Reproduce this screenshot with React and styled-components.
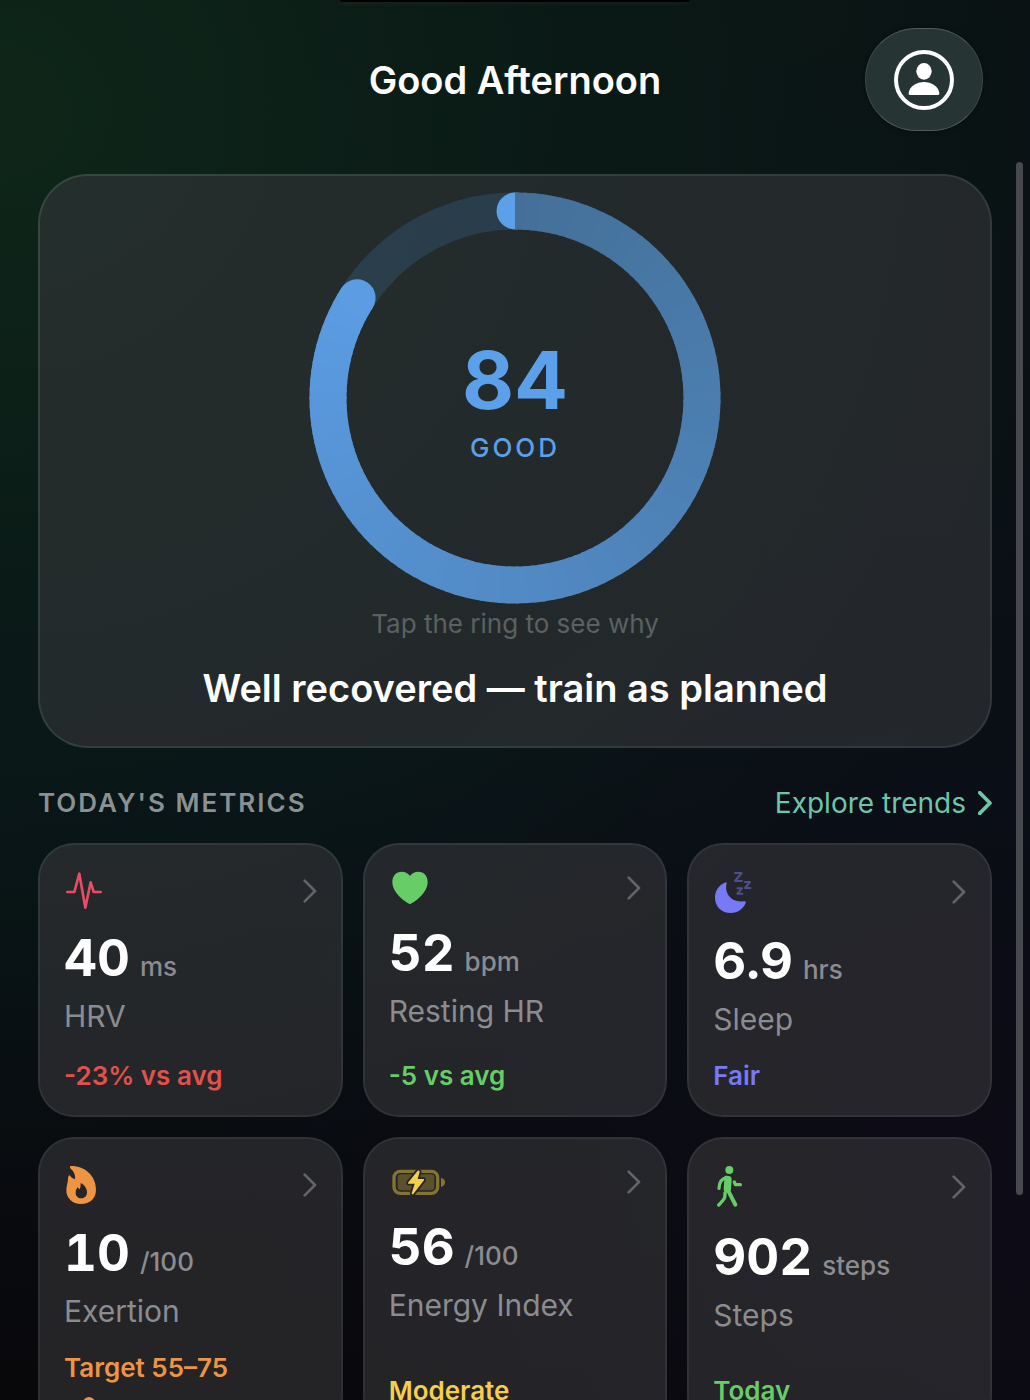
import React from "react";
import styled, { createGlobalStyle } from "styled-components";

const GlobalStyle = createGlobalStyle`
	* {
		box-sizing: border-box;
	}

	body {
		margin: 0;
		background: #06090c;
		font-family: Inter, "Liberation Sans", sans-serif;
		color: #ffffff;
	}

	h1, h2, p {
		margin: 0;
	}
`;

const RING_SIZE = 412;
const RING_STROKE = 37;
const RING_RADIUS = 187;
const RING_STEPS = 120;
const RING_FROM = [68, 112, 152];
const RING_TO = [91, 156, 227];

const pointOnRing = (turn) => {
	const angle = turn * Math.PI * 2 - Math.PI / 2;
	const c = RING_SIZE / 2;
	return [c + RING_RADIUS * Math.cos(angle), c + RING_RADIUS * Math.sin(angle)];
};

const ringColor = (t) =>
	`rgb(${RING_FROM.map((v, i) => Math.round(v + (RING_TO[i] - v) * t)).join(",")})`;

const ScoreRing = ({ score, label }) => {
	const total = score / 100;
	const [startX, startY] = pointOnRing(0);
	const [endX, endY] = pointOnRing(total);

	// svg has no conic gradient, so the arc is built from short pieces
	const pieces = Array.from({ length: RING_STEPS }, (_, i) => {
		const from = pointOnRing((i / RING_STEPS) * total);
		const to = pointOnRing(Math.min((i + 1.3) / RING_STEPS, 1) * total);
		return (
			<path
				key={i}
				d={`M${from.join(" ")} A${RING_RADIUS} ${RING_RADIUS} 0 0 1 ${to.join(" ")}`}
				stroke={ringColor(i / RING_STEPS)}
				strokeWidth={RING_STROKE}
				fill="none"
			/>
		);
	});

	return (
		<RingButton type="button">
			<svg width={RING_SIZE} height={RING_SIZE} viewBox={`0 0 ${RING_SIZE} ${RING_SIZE}`} aria-hidden="true">
				<circle
					cx={RING_SIZE / 2}
					cy={RING_SIZE / 2}
					r={RING_RADIUS}
					fill="none"
					stroke="#4aa0ea"
					strokeOpacity="0.17"
					strokeWidth={RING_STROKE}
				/>
				<circle cx={startX} cy={startY} r={RING_STROKE / 2} fill="#5ca0ea" />
				{pieces}
				<circle cx={endX} cy={endY} r={RING_STROKE / 2} fill={ringColor(1)} />
			</svg>
			<RingText>
				<RingScore>{score}</RingScore>
				<RingLabel>{label}</RingLabel>
			</RingText>
		</RingButton>
	);
};

const ProfileIcon = () => (
	<svg width="60" height="60" viewBox="0 0 180 180" aria-hidden="true">
		<circle cx="90" cy="90" r="84" fill="none" stroke="#fff" strokeWidth="12" />
		<ellipse cx="90" cy="64" rx="23" ry="25" fill="#fff" />
		<path
			d="M48 135Q43 135 44 129C47 108 68 96 90 96C112 96 133 108 136 129Q137 135 132 135Z"
			fill="#fff"
		/>
	</svg>
);

const Chevron = ({ weight = 8 }) => (
	<svg width="14" height="24" viewBox="0 0 42 72" aria-hidden="true">
		<path
			d="M5 5L36 36L5 67"
			fill="none"
			stroke="currentColor"
			strokeWidth={weight}
			strokeLinecap="round"
			strokeLinejoin="round"
		/>
	</svg>
);

const PulseIcon = () => (
	<svg width="40" height="43" viewBox="0 0 120 129" aria-hidden="true">
		<path
			d="M10 69H31L46 14L64 116L80 40L89 69H110"
			fill="none"
			stroke="#e84c66"
			strokeWidth="8"
			strokeLinecap="round"
			strokeLinejoin="round"
		/>
	</svg>
);

const HeartIcon = () => (
	<svg width="40" height="38" viewBox="0 0 120 114" aria-hidden="true">
		<path
			d="M63 105C58 105 10 75 10 39C10 20 22 8 38 8C49 8 58 13 63 21C68 13 77 8 88 8C104 8 116 20 116 39C116 75 68 105 63 105Z"
			fill="#67cd67"
		/>
	</svg>
);

const MoonIcon = () => (
	<svg width="40" height="46" viewBox="0 0 120 138" aria-hidden="true">
		<path
			d="M34 42Q41 37 41 43C33 74 56 102 92 97Q101 95 98 102C91 120 74 132 53 132C26 132 6 112 6 86C6 66 17 49 34 42Z"
			fill="#767af6"
		/>
		<g fill="none" stroke="#4f4e8c" strokeWidth="6" strokeLinejoin="round" strokeLinecap="round">
			<path d="M66 12H86L66 36H87" />
			<path d="M96 39H111L96 57H112" />
			<path d="M73 58H87L73 74H88" />
		</g>
	</svg>
);

const FlameIcon = () => (
	<svg width="40" height="44" viewBox="0 0 120 132" aria-hidden="true">
		<path
			fillRule="evenodd"
			d="M20 9C62 8 96 38 96 80C96 106 78 123 51 123C25 123 7 106 7 82C7 68 12 58 12 48C12 42 14 37 17 37C21 42 26 47 33 49C35 36 29 24 20 17C17 14 17 9 20 9ZM50 60C62 66 69 76 69 88C69 99 62 106 52 106C42 106 35 99 35 89C35 80 39 76 41 73C43 76 45 78 47 79C50 73 50 66 50 60Z"
			fill="#ee9443"
		/>
	</svg>
);

const BatteryIcon = () => (
	<svg width="58" height="38" viewBox="0 0 174 114" aria-hidden="true">
		<rect x="15" y="25" width="131" height="66" rx="19" fill="none" stroke="#83752f" strokeWidth="10" />
		<rect x="26" y="34" width="110" height="48" rx="9" fill="#5a522c" />
		<path d="M156 44C164 46 168 51 168 58C168 65 164 70 156 72Z" fill="#83752f" />
		<path
			d="M86 23L57 59Q56 62 59 62H77L68 91Q69 96 73 93L105 52Q107 48 103 48H86L92 26Q91 21 86 23Z"
			fill="#f5cf4a"
			stroke="#27272a"
			strokeWidth="11"
			paintOrder="stroke"
			strokeLinejoin="round"
		/>
	</svg>
);

const WalkIcon = () => (
	<svg width="40" height="48" viewBox="0 0 120 144" aria-hidden="true">
		<circle cx="49" cy="21" r="12" fill="#67cd67" />
		<g fill="none" stroke="#67cd67" strokeLinecap="round" strokeLinejoin="round">
			<path d="M45 50L43 78" strokeWidth="22" />
			<path d="M40 43C26 49 19 56 18 76" strokeWidth="10" />
			<path d="M64 57L67 65H82" strokeWidth="10" />
			<path d="M45 82L67 125" strokeWidth="12" />
			<path d="M36 90C37 107 33 109 17 126" strokeWidth="10" />
		</g>
	</svg>
);

const METRICS = [
	{ id: "hrv", icon: PulseIcon, value: "40", unit: "ms", name: "HRV", status: "-23% vs avg", color: "#e0524b" },
	{ id: "resting-hr", icon: HeartIcon, value: "52", unit: "bpm", name: "Resting HR", status: "-5 vs avg", color: "#67cd67" },
	{ id: "sleep", icon: MoonIcon, value: "6.9", unit: "hrs", name: "Sleep", status: "Fair", color: "#767af6" },
	{
		id: "exertion",
		icon: FlameIcon,
		value: "10",
		unit: "/100",
		name: "Exertion",
		status: "Target 55–75",
		color: "#ee9443",
		progress: 10,
	},
	{ id: "energy", icon: BatteryIcon, value: "56", unit: "/100", name: "Energy Index", status: "Moderate", color: "#f5cf4a" },
	{ id: "steps", icon: WalkIcon, value: "902", unit: "steps", name: "Steps", status: "Today", color: "#67cd67" },
];

const Metric = ({ metric }) => {
	const Icon = metric.icon;
	return (
		<MetricCard href={`#${metric.id}`}>
			<MetricTop>
				<Icon />
				<Chevron />
			</MetricTop>
			<MetricValue>
				{metric.value}
				<MetricUnit>{metric.unit}</MetricUnit>
			</MetricValue>
			<MetricName>{metric.name}</MetricName>
			<MetricStatus $color={metric.color}>{metric.status}</MetricStatus>
			{metric.progress !== undefined ? (
				<Progress>
					<ProgressKnob $color={metric.color} style={{ left: `${metric.progress}%` }} />
				</Progress>
			) : null}
		</MetricCard>
	);
};

const App = () => {
	return (
		<Screen>
			<GlobalStyle />
			<Header>
				<Title>Good Afternoon</Title>
				<ProfileButton type="button" aria-label="Profile">
					<ProfileIcon />
				</ProfileButton>
			</Header>
			<Content>
				<Hero>
					<ScoreRing score={84} label="GOOD" />
					<Hint>Tap the ring to see why</Hint>
					<Headline>Well recovered — train as planned</Headline>
				</Hero>
				<SectionHeader>
					<SectionTitle>TODAY'S METRICS</SectionTitle>
					<TrendsLink href="#trends">
						Explore trends
						<Chevron weight={11} />
					</TrendsLink>
				</SectionHeader>
				<MetricsGrid>
					{METRICS.map((metric) => (
						<Metric key={metric.id} metric={metric} />
					))}
				</MetricsGrid>
			</Content>
			<ScrollIndicator />
		</Screen>
	);
};

export default App;

const Screen = styled.div`
	position: relative;
	display: flex;
	flex-direction: column;
	height: 100vh;
	overflow: hidden;
	background:
		radial-gradient(ellipse 110% 78% at 0% 8%, rgba(15, 42, 26, 0.85), rgba(11, 36, 25, 0.45) 50%, transparent),
		radial-gradient(ellipse 80% 50% at 100% 86%, rgba(14, 12, 24, 0.85), transparent),
		linear-gradient(to bottom, #0a1113, #091016 55%, #08080b);

	&::before {
		content: "";
		position: absolute;
		top: 0;
		left: 50%;
		width: 34%;
		height: 2px;
		transform: translateX(-50%);
		background: #000000;
		box-shadow: 0 1px 4px #1e2d27;
		border-radius: 0 0 16px 16px;
	}
`;

const Header = styled.header`
	display: grid;
	grid-template-columns: 1fr auto 1fr;
	align-items: center;
	flex-shrink: 0;
	padding: 28px 47px 43px;
`;

const Title = styled.h1`
	grid-column: 2;
	font-size: 38px;
	font-weight: 600;
	line-height: 48px;
`;

const ProfileButton = styled.button`
	justify-self: end;
	display: flex;
	align-items: center;
	justify-content: center;
	width: 118px;
	height: 103px;
	padding: 0;
	border: 1px solid rgba(255, 255, 255, 0.1);
	border-top-color: rgba(255, 255, 255, 0.2);
	border-bottom-color: rgba(255, 255, 255, 0.2);
	border-radius: 51px;
	background: #263433;
	box-shadow: 0 0 4px rgba(0, 0, 0, 0.5);
	cursor: pointer;
`;

const Content = styled.main`
	flex: 1;
	min-height: 0;
	padding: 0 38px 38px;
	overflow-y: auto;
	scrollbar-width: none;
`;

const Hero = styled.section`
	display: flex;
	flex-direction: column;
	align-items: center;
	padding: 16px 24px 34px;
	border: 2px solid rgba(255, 255, 255, 0.17);
	border-radius: 50px;
	background: rgba(52, 54, 56, 0.62);
	background-clip: padding-box;
`;

const RingButton = styled.button`
	display: grid;
	place-items: center;
	padding: 0;
	border: 0;
	background: none;
	font-family: inherit;
	color: #5ca0ea;
	cursor: pointer;

	> * {
		grid-area: 1 / 1;
	}
`;

const RingText = styled.span`
	display: flex;
	flex-direction: column;
	align-items: center;
	gap: 2px;
	padding-top: 2px;
`;

const RingScore = styled.span`
	font-size: 80px;
	font-weight: 700;
	line-height: 96px;
`;

const RingLabel = styled.span`
	font-size: 26px;
	font-weight: 500;
	line-height: 36px;
	letter-spacing: 3px;
`;

const Hint = styled.p`
	margin-top: 2px;
	font-size: 26px;
	line-height: 36px;
	color: #5b6161;
`;

const Headline = styled.h2`
	margin-top: 22px;
	font-size: 38px;
	font-weight: 600;
	line-height: 48px;
`;

const SectionHeader = styled.div`
	display: flex;
	align-items: center;
	justify-content: space-between;
	margin: 35px 0 20px;
`;

const SectionTitle = styled.h2`
	font-size: 26px;
	font-weight: 600;
	line-height: 40px;
	letter-spacing: 2px;
	color: #8b9092;
`;

const TrendsLink = styled.a`
	display: flex;
	align-items: center;
	gap: 12px;
	font-size: 28px;
	line-height: 40px;
	color: #6fc5a8;
	text-decoration: none;
`;

const MetricsGrid = styled.div`
	display: grid;
	grid-template-columns: repeat(3, 1fr);
	gap: 20px;
`;

const MetricCard = styled.a`
	display: flex;
	flex-direction: column;
	padding: 24px;
	border: 2px solid rgba(255, 255, 255, 0.16);
	border-radius: 36px;
	background: rgba(53, 54, 56, 0.62);
	background-clip: padding-box;
	color: inherit;
	text-decoration: none;
`;

const MetricTop = styled.div`
	display: flex;
	align-items: center;
	justify-content: space-between;
	color: #626466;
`;

const MetricValue = styled.div`
	display: flex;
	align-items: baseline;
	gap: 10px;
	margin-top: 16px;
	font-size: 51px;
	font-weight: 700;
	font-variant-numeric: tabular-nums;
	line-height: 60px;
`;

const MetricUnit = styled.span`
	font-size: 26px;
	font-weight: 500;
	font-variant-numeric: normal;
	line-height: 30px;
	color: #8b8c90;
`;

const MetricName = styled.div`
	margin: 10px 0 24px;
	font-size: 30px;
	line-height: 36px;
	color: #8b8c90;
`;

const MetricStatus = styled.div`
	margin-top: auto;
	font-size: 26px;
	font-weight: 600;
	line-height: 30px;
	color: ${(props) => props.$color};
`;

const Progress = styled.div`
	position: relative;
	height: 6px;
	margin-top: 17px;
	border-radius: 3px;
	background: rgba(255, 255, 255, 0.1);
`;

const ProgressKnob = styled.div`
	position: absolute;
	top: -3px;
	width: 12px;
	height: 12px;
	margin-left: -6px;
	border-radius: 50%;
	background: ${(props) => props.$color};
`;

const ScrollIndicator = styled.div`
	position: absolute;
	top: 162px;
	right: 7px;
	bottom: 205px;
	width: 7px;
	border-radius: 4px;
	background: #48494f;
`;
